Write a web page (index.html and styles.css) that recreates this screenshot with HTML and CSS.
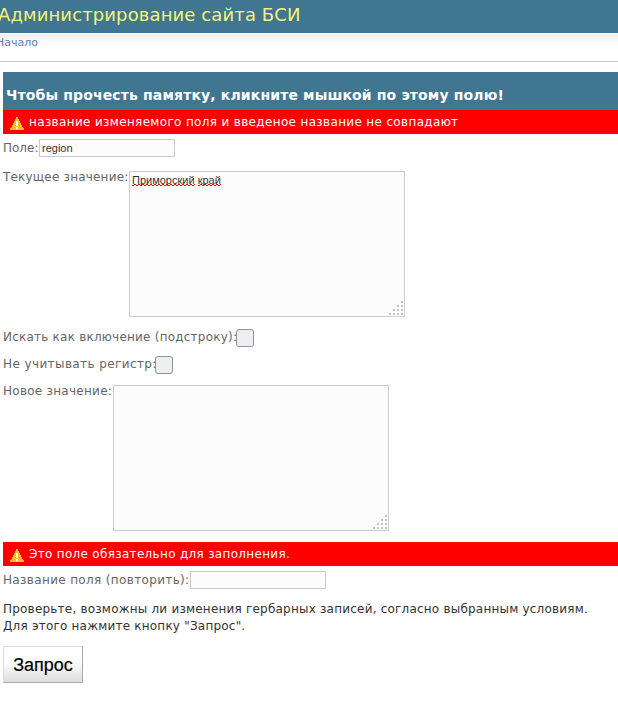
FILE: index.html
```html
<!DOCTYPE html>
<html lang="ru">
<head>
<meta charset="utf-8">
<title>Администрирование сайта БСИ</title>
<link rel="stylesheet" href="styles.css">
</head>
<body>
<header class="header"><h1>Администрирование сайта БСИ</h1></header>
<nav class="breadcrumbs"><a>Начало</a></nav>
<main class="content">
  <h2 class="memo">Чтобы прочесть памятку, кликните мышкой по этому полю!</h2>
  <div class="error">
    <svg class="warn" width="14" height="13" viewBox="0 0 14 13"><path d="M6 0H8V2H9V4H10V6H11V8H12V10H13V11H14V13H0V11H1V10H2V8H3V6H4V4H5V2H6Z" fill="#ffc20e"/><path d="M6 4H8V9H6ZM6 10H8V12H6Z" fill="#fff"/></svg>
    <span class="e1">название изменяемого поля и введеное название не совпадают</span>
  </div>
  <div class="row field"><label class="l1">Поле:</label><div class="input">region</div></div>
  <div class="row current"><label class="l2">Текущее значение:</label><div class="area"><span class="misspelt">Приморский</span> <span class="misspelt">край</span><svg class="grip" width="14" height="14"><path d="M12 0h2v2h-2zM8 4h2v2h-2zM12 4h2v2h-2zM4 8h2v2h-2zM8 8h2v2h-2zM12 8h2v2h-2zM0 12h2v2h-2zM4 12h2v2h-2zM8 12h2v2h-2zM12 12h2v2h-2z" fill="#c4c4c4"/></svg></div></div>
  <div class="row check"><label class="l3">Искать как включение (подстроку):</label><span class="box"></span></div>
  <div class="row check"><label class="l4">Не учитывать регистр:</label><span class="box"></span></div>
  <div class="row new"><label class="l5">Новое значение:</label><div class="area"><svg class="grip" width="14" height="14"><path d="M12 0h2v2h-2zM8 4h2v2h-2zM12 4h2v2h-2zM4 8h2v2h-2zM8 8h2v2h-2zM12 8h2v2h-2zM0 12h2v2h-2zM4 12h2v2h-2zM8 12h2v2h-2zM12 12h2v2h-2z" fill="#c4c4c4"/></svg></div></div>
  <div class="error">
    <svg class="warn" width="14" height="13" viewBox="0 0 14 13"><path d="M6 0H8V2H9V4H10V6H11V8H12V10H13V11H14V13H0V11H1V10H2V8H3V6H4V4H5V2H6Z" fill="#ffc20e"/><path d="M6 4H8V9H6ZM6 10H8V12H6Z" fill="#fff"/></svg>
    <span class="e2">Это поле обязательно для заполнения.</span>
  </div>
  <div class="row field"><label class="l6">Название поля (повторить):</label><div class="input"></div></div>
  <p class="hint">Проверьте, возможны ли изменения гербарных записей, согласно выбранным условиям.<br>Для этого нажмите кнопку "Запрос".</p>
  <button class="submit">Запрос</button>
</main>
</body>
</html>
```

FILE: styles.css
```css
* { box-sizing: border-box; }
body { margin: 0; background: #fff; color: #333; font: 12px/17px "DejaVu Sans", sans-serif; overflow: hidden; white-space: nowrap; }
h1, h2, p { margin: 0; }
.header { height: 33px; background: #417690; color: #f4f379; }
.header h1 { font-size: 18px; line-height: 30px; font-weight: 400; margin-left: -2px; letter-spacing: .11px; }
.breadcrumbs { height: 29px; border-bottom: 1px solid #ccc; background: linear-gradient(#f0f0f0, #fff 11px); border-top: 1px solid #fff; font-size: 11px; line-height: 17px; color: #5b80b2; }
.breadcrumbs a { margin-left: -4px; }
.content { margin: 10px 0 0 3px; }
.memo { height: 38px; background: #417690; color: #fff; font-size: 14px; font-weight: 700; line-height: 18px; padding: 14px 0 0 3px; letter-spacing: .14px; }
.error { height: 24px; background: #f00; color: #fff; display: flex; line-height: 24px; padding-left: 7px; gap: 5px; }
.warn { margin-top: 7px; }
.e1 { letter-spacing: .34px; }
.e2 { letter-spacing: .31px; }
.row { display: flex; align-items: flex-start; color: #666; }
label { flex: none; margin-top: 1px; }
.field { padding-top: 5px; height: 37px; }
.input, .area { background: #fcfcfc; border: 1px solid #ccc; font: 11px/16px "Liberation Sans", sans-serif; color: #333; padding: 0 2px; }
.input { width: 136px; height: 18px; }
.area { position: relative; width: 276px; height: 146px; padding: 0 2px; }
.l1 { width: 36px; }
.l2 { width: 126px; margin-top: -2px; letter-spacing: .2px; }
.l3 { width: 233px; letter-spacing: .22px; }
.l4 { width: 152px; letter-spacing: .4px; }
.l5 { width: 110px; margin-top: -2px; letter-spacing: .27px; }
.l6 { width: 187px; letter-spacing: .35px; }
.current { height: 157px; }
.check { height: 27px; }
.box { position: relative; width: 18px; height: 18px; margin-top: 1px; background: #edeff1; border: 1px solid #8f9397; border-radius: 3px; }
.new { height: 157px; margin-top: 3px; }
.grip { position: absolute; right: 1px; bottom: 1px; }
.misspelt { display: inline-block; height: 14px; line-height: 16px; vertical-align: top; background: repeating-linear-gradient(90deg, #e00 0 2px, transparent 2px 4px) 0 100% / 100% 1px no-repeat, repeating-linear-gradient(90deg, transparent 0 2px, #e00 2px 4px) 0 calc(100% - 1px) / 100% 1px no-repeat; }
.hint { margin-top: -2px; letter-spacing: .21px; }
.submit { display: block; margin: 11px 0 0; width: 80px; height: 37px; padding: 1px 0 0; border: 1px solid; border-color: #ddd #aaa #aaa #ddd; background: linear-gradient(#fff 40%, #ddd); color: #000; font: 18px/34px "Liberation Sans", sans-serif; -webkit-text-stroke: .2px #000; }
```
